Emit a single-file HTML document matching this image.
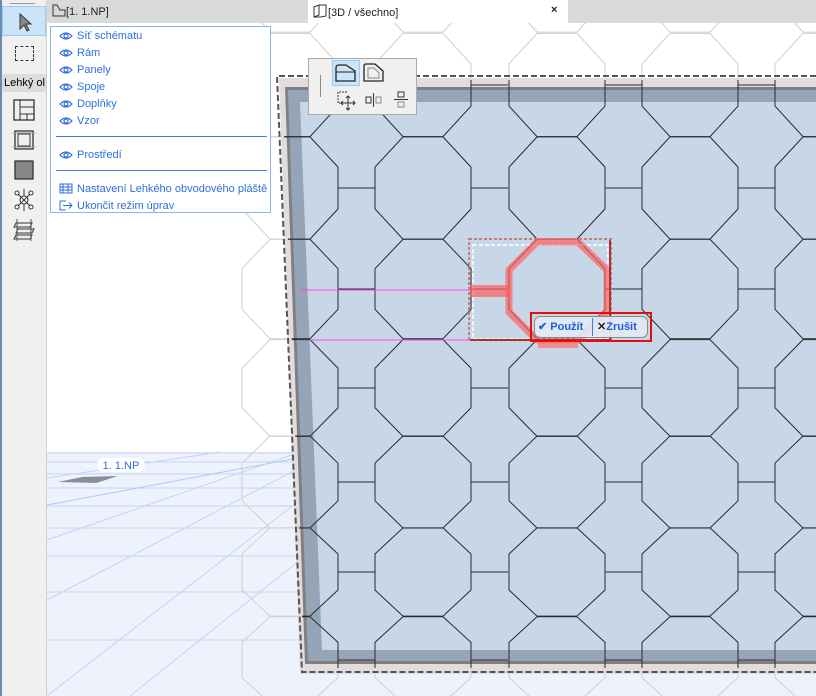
<!DOCTYPE html>
<html style="overflow:hidden"><head><meta charset="utf-8"><style>
*{margin:0;padding:0;box-sizing:border-box}
html,body{width:816px;height:696px;overflow:hidden}
body{position:relative;background:#fff;font-family:"Liberation Sans",sans-serif}
.abs{position:absolute}
.menu{left:50px;top:26px;width:221px;height:187px;background:#fff;border:1px solid #8fb2f0}
.mi{position:absolute;left:8px;font-size:11px;color:#2f6ee0;line-height:13px;white-space:nowrap}
.mi svg{vertical-align:-2px;margin-right:4px}
</style></head><body>

<svg class="abs" style="left:0;top:0" width="816" height="696" viewBox="0 0 816 696">
<defs>
<g id="oct">
<polygon points="-20,-46.5 20,-46.5 48,-19 48,19 20,46.5 -20,46.5 -48,19 -48,-19" fill="none" vector-effect="non-scaling-stroke"/>
<line x1="48" y1="0" x2="85" y2="0" vector-effect="non-scaling-stroke"/>
</g>
<g id="col">
<use href="#oct" transform="translate(0,85) scale(1,1.11)"/>
<use href="#oct" transform="translate(0,188) scale(1,1.10)"/>
<use href="#oct" transform="translate(0,289) scale(1,1.07)"/>
<use href="#oct" transform="translate(0,388) scale(1,1.04)"/>
<use href="#oct" transform="translate(0,482) scale(1,0.99)"/>
<use href="#oct" transform="translate(0,572) scale(1,0.95)"/>
<use href="#oct" transform="translate(0,660) scale(1,0.93)"/>
<use href="#oct" transform="translate(0,745) scale(1,0.9)"/>
<use href="#oct" transform="translate(0,-20) scale(1,1.12)"/>
</g>
<g id="pat">
<use href="#col" x="290"/><use href="#col" x="423"/><use href="#col" x="557"/><use href="#col" x="690"/><use href="#col" x="823"/>
</g>
<clipPath id="fr"><polygon points="282,80 816,80 816,668 304,668"/></clipPath>
<clipPath id="all"><rect x="0" y="0" width="816" height="696"/></clipPath>
</defs>
<g clip-path="url(#all)">
<rect x="47" y="452" width="769" height="244" fill="#edf2fc"/>
<g stroke="#c4d4f4" stroke-width="1">
<line x1="47" y1="453" x2="816" y2="453"/><line x1="47" y1="462" x2="816" y2="462"/><line x1="47" y1="474" x2="816" y2="474"/><line x1="47" y1="488" x2="816" y2="488"/><line x1="47" y1="506" x2="816" y2="506"/><line x1="47" y1="528" x2="816" y2="528"/><line x1="47" y1="556" x2="816" y2="556"/><line x1="47" y1="592" x2="816" y2="592"/><line x1="47" y1="640" x2="816" y2="640"/>
<line x1="47" y1="505" x2="330" y2="452" stroke="#b0c8f4"/><line x1="47" y1="540" x2="300" y2="452"/><line x1="47" y1="600" x2="330" y2="452"/><line x1="47" y1="696" x2="300" y2="500"/><line x1="130" y1="696" x2="300" y2="560"/><line x1="47" y1="478" x2="220" y2="452"/>
</g>
<polygon points="58,482 82,477 118,476 96,483" fill="#8a8e96"/>
<g stroke="#cfcfcf" stroke-width="1"><use href="#pat"/></g>
<polygon points="279,78 816,78 816,674 300,674" fill="#e3dcdc"/>
<polygon points="285,87 816,87 816,664 305,664" fill="#808084"/>
<polygon points="288,90 816,90 816,661 308,661" fill="#95a4b6"/>
<polygon points="300,102 816,102 816,650 322,650" fill="#c8d7e7"/>
<g clip-path="url(#fr)" stroke="#2a2a2a" stroke-width="1"><use href="#pat"/></g>
<g fill="none" stroke="#555" stroke-width="2" stroke-dasharray="6 3">
<polyline points="816,76 277,76 302,672 816,672"/>
</g>
<line x1="300" y1="290" x2="470" y2="290" stroke="#ff44ff"/>
<line x1="310" y1="340" x2="470" y2="340" stroke="#ff44ff"/>
<rect x="469" y="239" width="142" height="101" fill="none" stroke="#c08080" stroke-width="2" stroke-dasharray="3 2"/>
<rect x="473" y="245" width="135" height="94" fill="none" stroke="#fff" stroke-width="1.5" stroke-dasharray="4 2"/>
<polygon points="537,242 578,242 607,270 607,312 578,340 537,340 509,312 509,270" fill="none" stroke="#ff6060" stroke-opacity=".7" stroke-width="7"/>
<rect x="470" y="285" width="40" height="12" fill="#ff6060" fill-opacity=".7"/>
<line x1="610" y1="240" x2="610" y2="340" stroke="#b03030" stroke-width="2"/>
<line x1="470" y1="340" x2="610" y2="340" stroke="#b03030" stroke-width="2"/>
<rect x="538" y="340" width="40" height="8" fill="#ff7070" fill-opacity=".7"/>
<rect x="97" y="458" width="48" height="14" rx="7" fill="#fff"/>
<text x="121" y="469" font-size="11" fill="#2f6ee0" text-anchor="middle" font-family="Liberation Sans">1. 1.NP</text>
<path d="M33 543 L33 560 L37 556 L40 563 L42 562 L39 555 L45 555 Z" fill="#fff" stroke="#000" stroke-width="1"/>
</g>
</svg>

<div class="abs" style="left:47px;top:0;width:769px;height:23px;background:#d9d9d9"></div>
<div class="abs" style="left:52px;top:4px;font-size:11px;color:#222"><svg width="14" height="13" style="vertical-align:-2px"><path d="M1 1V12H13V6H8L5 1Z" fill="none" stroke="#333"/></svg>[1. 1.NP]</div>
<div class="abs" style="left:308px;top:0;width:260px;height:23px;background:#fff"></div>
<div class="abs" style="left:313px;top:4px;font-size:11px;color:#222"><svg width="15" height="14" style="vertical-align:-2px"><path d="M1 3L6 1H13V12L8 13H1Z M6 1V11L1 13" fill="none" stroke="#333"/></svg>[3D / všechno]</div>
<div class="abs" style="left:551px;top:4px;font-size:11px;color:#222;font-weight:bold">×</div>

<div class="abs" style="left:0;top:0;width:47px;height:696px;background:#f0f0f0;border-right:1px solid #d0d0d0;border-left:2px solid #6a8cb0"></div>
<div class="abs" style="left:10px;top:3px;width:25px;height:1px;background:#999"></div>
<div class="abs" style="left:2px;top:6px;width:44px;height:30px;background:#cce4f7;border:1px solid #99c9ef"></div>
<svg class="abs" style="left:18px;top:12px" width="14" height="20"><path d="M2 2V17L6 13L9 19L11 18L8 12H13Z" fill="#888" stroke="#333"/></svg>
<div class="abs" style="left:15px;top:46px;width:19px;height:15px;border:1px dashed #333"></div>
<div class="abs" style="left:2px;top:74px;width:44px;height:18px;background:#dcdcdc;border-radius:3px;font-size:11px;line-height:18px;padding-left:2px;white-space:nowrap;overflow:hidden;color:#000">Lehký ol</div>
<svg class="abs" style="left:13px;top:99px" width="22" height="22"><rect x="1" y="1" width="20" height="20" fill="none" stroke="#333" stroke-width="1.3"/><path d="M7 1V21M7 8H21M7 15H21M14 15V21" stroke="#333" fill="none"/></svg>
<svg class="abs" style="left:13px;top:129px" width="22" height="22"><rect x="2" y="2" width="18" height="18" fill="none" stroke="#333" stroke-width="1.3"/><rect x="5" y="5" width="12" height="12" fill="none" stroke="#333"/><path d="M0 4H22M0 18H22" stroke="#999"/></svg>
<svg class="abs" style="left:13px;top:159px" width="22" height="22"><rect x="2" y="2" width="18" height="18" fill="#888" stroke="#333" stroke-width="1.3"/></svg>
<svg class="abs" style="left:13px;top:189px" width="22" height="22"><circle cx="11" cy="11" r="4" fill="#fff" stroke="#333"/><path d="M4 4L18 18M18 4L4 18M11 0V7M11 15V22" stroke="#333"/><circle cx="4" cy="4" r="2" fill="#fff" stroke="#333"/><circle cx="18" cy="4" r="2" fill="#fff" stroke="#333"/><circle cx="4" cy="18" r="2" fill="#fff" stroke="#333"/><circle cx="18" cy="18" r="2" fill="#fff" stroke="#333"/></svg>
<svg class="abs" style="left:13px;top:219px" width="22" height="22"><path d="M3 4H19L17 8H1ZM5 10H21L19 14H3ZM3 16H19L17 20H1Z" fill="none" stroke="#333"/><path d="M4 0V22M18 0V22" stroke="#555"/></svg>

<div class="abs menu">
<svg width="0" height="0" style="position:absolute"><defs><g id="eye"><path d="M1 5Q7 -1 13 5Q7 11 1 5Z" fill="none" stroke="#2f6ee0" stroke-width="1.2"/><circle cx="7" cy="5" r="2" fill="none" stroke="#2f6ee0" stroke-width="1.2"/></g></defs></svg>
<div class="mi" style="top:3px"><svg width="14" height="10"><use href="#eye"/></svg>Síť schématu</div>
<div class="mi" style="top:20px"><svg width="14" height="10"><use href="#eye"/></svg>Rám</div>
<div class="mi" style="top:37px"><svg width="14" height="10"><use href="#eye"/></svg>Panely</div>
<div class="mi" style="top:54px"><svg width="14" height="10"><use href="#eye"/></svg>Spoje</div>
<div class="mi" style="top:71px"><svg width="14" height="10"><use href="#eye"/></svg>Doplňky</div>
<div class="mi" style="top:88px"><svg width="14" height="10"><use href="#eye"/></svg>Vzor</div>
<div class="abs" style="left:5px;top:109px;width:211px;height:1px;background:#3b7de0"></div>
<div class="mi" style="top:122px"><svg width="14" height="10"><use href="#eye"/></svg>Prostředí</div>
<div class="abs" style="left:5px;top:143px;width:211px;height:1px;background:#3b7de0"></div>
<div class="mi" style="top:156px"><svg width="14" height="11"><path d="M1 1H13V10H1ZM1 4H13M1 7H13M4 1V10M9 1V10" fill="none" stroke="#2f6ee0"/></svg>Nastavení Lehkého obvodového pláště</div>
<div class="mi" style="top:173px"><svg width="14" height="11"><path d="M7 1H1V10H7M4 5.5H13M10 2.5L13 5.5L10 8.5" fill="none" stroke="#2f6ee0"/></svg>Ukončit režim úprav</div>
</div>

<div class="abs" style="left:308px;top:58px;width:109px;height:57px;background:#f0f0f0;border:1px solid #aaa"></div>
<div class="abs" style="left:320px;top:75px;width:1px;height:22px;background:#888"></div>
<div class="abs" style="left:332px;top:60px;width:28px;height:26px;background:#cce4f7;border:1px solid #99c9ef"></div>
<svg class="abs" style="left:335px;top:64px" width="22" height="18"><path d="M1 4Q1 1 4 1H11L20 7V17H1Z" fill="none" stroke="#222" stroke-width="1.3"/><path d="M1 8H20" stroke="#222"/></svg>
<svg class="abs" style="left:363px;top:63px" width="22" height="20"><path d="M1 3Q1 1 3 1H12L20 8V18H1Z" fill="none" stroke="#222" stroke-width="1.3"/><path d="M5 5H11L16 10V15H5Z" fill="none" stroke="#888"/></svg>
<svg class="abs" style="left:337px;top:91px" width="20" height="20"><path d="M10 1H1V12H4" fill="none" stroke="#333" stroke-dasharray="2 1"/><path d="M11 5V19M4 12H18M9 7L11 5L13 7M9 17L11 19L13 17M6 10L4 12L6 14M16 10L18 12L16 14" fill="none" stroke="#333"/></svg>
<svg class="abs" style="left:365px;top:93px" width="18" height="14"><rect x="1" y="4" width="5" height="6" fill="none" stroke="#333"/><rect x="11" y="4" width="5" height="6" fill="none" stroke="#888"/><path d="M8.5 0V14" stroke="#333"/></svg>
<svg class="abs" style="left:394px;top:91px" width="14" height="18"><rect x="4" y="1" width="6" height="5" fill="none" stroke="#333"/><rect x="4" y="11" width="6" height="5" fill="none" stroke="#888"/><path d="M0 8.5H14" stroke="#333"/></svg>

<div class="abs" style="left:530px;top:312px;width:122px;height:30px;border:2px solid #e01010"></div>
<div class="abs" style="left:534px;top:316px;width:114px;height:22px;border:1px solid #8a8a8a;border-radius:6px;background:rgba(225,233,244,.92)"></div>
<div class="abs" style="left:538px;top:320px;font-size:11px;color:#1f5fd8;font-weight:bold">✔ Použít</div>
<div class="abs" style="left:592px;top:318px;width:1px;height:18px;background:#3b7de0"></div>
<div class="abs" style="left:597px;top:320px;font-size:11px;color:#1f5fd8;font-weight:bold"><span style="color:#223">✕</span>Zrušit</div>
</body></html>
